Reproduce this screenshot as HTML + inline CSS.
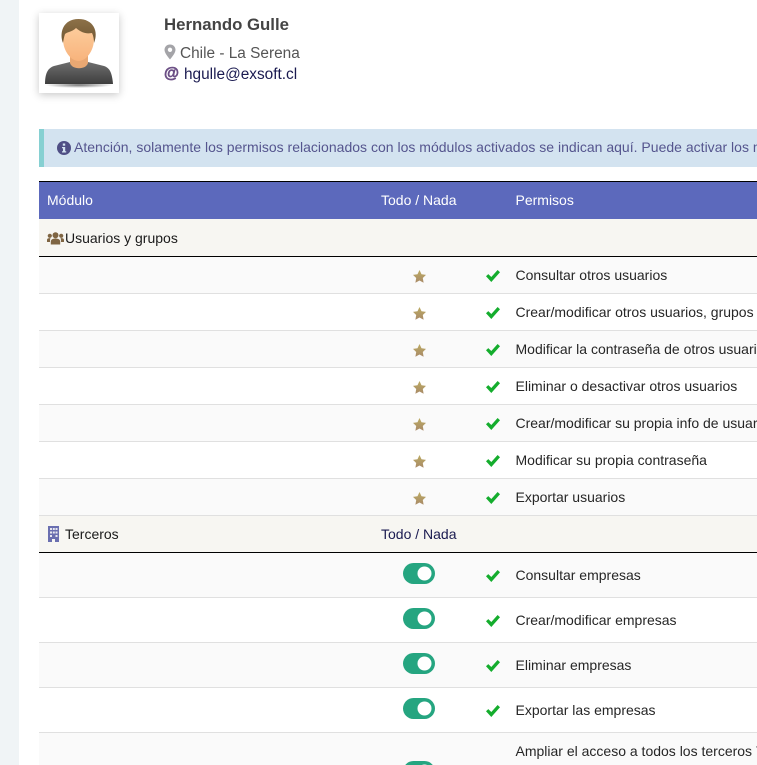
<!DOCTYPE html>
<html><head><meta charset="utf-8"><style>
html,body{margin:0;padding:0;background:#fff;overflow:hidden;width:757px;height:765px}
#p{position:relative;width:757px;height:765px;overflow:hidden;font:14px/20px "Liberation Sans",sans-serif;color:#262626}
.a{position:absolute;white-space:nowrap}
.row{position:absolute;left:39px;width:718px;border-bottom:1px solid #e0e0e0;box-sizing:border-box}
.t{position:absolute;left:515.500px;white-space:nowrap;height:20px}
</style></head><body><div id="p">
<div class="a" style="left:0;top:0;width:19px;height:765px;background:#f0f4f6"></div>

<div class="a" style="left:39px;top:13px;width:80px;height:80px;background:#fff;box-shadow:0 2px 8px rgba(0,0,0,.22)">
<svg width="80" height="80" viewBox="0 0 80 80">
<defs>
<linearGradient id="b" x1="0" y1="0" x2="0" y2="1"><stop offset="0" stop-color="#6e6e6e"/><stop offset="1" stop-color="#3e3e3e"/></linearGradient>
<linearGradient id="f" x1="0" y1="0" x2="0" y2="1"><stop offset="0" stop-color="#fdcf9f"/><stop offset="1" stop-color="#f8b37c"/></linearGradient>
<linearGradient id="hr" x1="0" y1="0" x2="0" y2="1"><stop offset="0" stop-color="#8d7148"/><stop offset="1" stop-color="#6f5632"/></linearGradient>
<radialGradient id="s" cx=".5" cy=".5" r=".5"><stop offset="0" stop-color="#777"/><stop offset="1" stop-color="#fff"/></radialGradient>
</defs>
<ellipse cx="40" cy="72" rx="34" ry="3" fill="url(#s)"/>
<path d="M6 71C6 60 9 55 15 53L31 49H49L65 53C71 55 73 60 74 71Z" fill="url(#b)"/>
<path d="M31 42V50C33 57 47 57 49 50V42Z" fill="#e9a873"/>
<path d="M24 26C24 16 30 11 39.500 11C49 11 55 16 55 26C55 38 47 48 39.500 48C32 48 24 38 24 26Z" fill="url(#f)"/>
<path d="M24 30C20 20 24 6 39.500 6C54 6 60 18 55 30C55 27 54.500 23 53 20C47 21 43 20 37 15C33 19 28 19 26 21C25 24 24.500 27 24 30Z" fill="url(#hr)"/>
</svg></div>

<div class="a" style="left:164px;top:15px;font-weight:bold;font-size:16.800px;color:#444">Hernando Gulle</div>
<svg class="a" style="left:164px;top:44px" width="12" height="16" viewBox="0 0 12 16"><path fill-rule="evenodd" d="M6 0.500C2.800 0.500 0.500 2.900 0.500 5.800C0.500 9 4 13 6 15.500C8 13 11.500 9 11.500 5.800C11.500 2.900 9.200 0.500 6 0.500ZM6 3.600A2.200 2.200 0 1 1 6 8A2.200 2.200 0 1 1 6 3.600Z" fill="#a4a4a8"/></svg>
<div class="a" style="left:180px;top:44px;font-size:15.400px;color:#555">Chile - La Serena</div>
<div class="a" style="left:164px;top:64px;font-size:15.400px;font-weight:bold;color:#6c4f85;-webkit-text-stroke:.6px #6c4f85">@</div>
<div class="a" style="left:184px;top:65px;font-size:15.400px;color:#1a1a50">hgulle@exsoft.cl</div>

<div class="a" style="left:39px;top:129px;width:718px;height:38px;background:#d3e3f0;overflow:hidden">
<div class="a" style="left:0;top:0;width:5px;height:38px;background:#86d0d2"></div>
<svg class="a" style="left:18px;top:12px" width="14" height="14" viewBox="0 0 14 14"><circle cx="7" cy="7" r="7" fill="#4f4f85"/><rect x="5.800" y="2.500" width="2.400" height="2.200" fill="#d3e3f0"/><path d="M5 6H8.200V10.200H9.200V11.500H5V10.200H6V7.300H5Z" fill="#d3e3f0"/></svg>
<div class="a" style="left:35px;top:8px;color:#55558e;font-size:14px;letter-spacing:.01px">Atención, solamente los permisos relacionados con los módulos activados se indican aquí. Puede activar los módulos</div>
</div>

<div class="a" style="left:39px;top:181px;width:718px;height:38px;background:#5c69bc;border-top:1px solid #000;box-sizing:border-box;color:#fff">
<div class="a" style="left:8px;top:8px">Módulo</div>
<div class="a" style="left:342px;top:8px">Todo / Nada</div>
<div class="a" style="left:476.500px;top:8px">Permisos</div>
</div>

<div class="a" style="left:39px;top:219px;width:718px;height:38px;background:#f7f6f2;border-bottom:1px solid #000;box-sizing:border-box;color:#1a1a1a">
<svg class="a" style="left:8px;top:13px" width="17" height="13" viewBox="0 0 17 13" fill="#7f6543"><circle cx="8.500" cy="3.200" r="3"/><circle cx="2.800" cy="3.800" r="2.100"/><circle cx="14.200" cy="3.800" r="2.100"/><path d="M3.800 12.500V9.500C3.800 7.500 6 6.500 8.500 6.500C11 6.500 13.200 7.500 13.200 9.500V12.500Z"/><path d="M0 10V8C0 6.500 1.500 6 3.500 6.200C3 7.200 3 8.500 3 10Z"/><path d="M17 10V8C17 6.500 15.500 6 13.500 6.200C14 7.200 14 8.500 14 10Z"/></svg>
<div class="a" style="left:26px;top:9px">Usuarios y grupos</div>
</div>

<svg width="0" height="0" style="position:absolute"><defs>
<linearGradient id="st" x1="0" y1="0" x2="0" y2="1"><stop offset="0" stop-color="#bcab62"/><stop offset="1" stop-color="#a98a68"/></linearGradient>
<symbol id="star" viewBox="0 0 13 13"><path d="M6.500 0L8.500 4.300L13 4.900L9.800 8L10.600 12.800L6.500 10.500L2.400 12.800L3.200 8L0 4.900L4.500 4.300Z" fill="url(#st)"/></symbol>
<symbol id="chk" viewBox="0 0 14 12"><path d="M0 6.300L2.300 4.100L5.300 7L11.600 0L14 2.200L5.300 12Z" fill="#14ad2d"/></symbol>
<symbol id="tog" viewBox="0 0 32 21"><rect width="32" height="21" rx="10.500" fill="#25a580"/><circle cx="21.500" cy="10.500" r="7" fill="#fff"/></symbol>
</defs></svg>

<div class="row" style="top:257px;height:37px;background:#fafafa"></div>
<div class="row" style="top:294px;height:37px;background:#fff"></div>
<div class="row" style="top:331px;height:37px;background:#fafafa"></div>
<div class="row" style="top:368px;height:37px;background:#fff"></div>
<div class="row" style="top:405px;height:37px;background:#fafafa"></div>
<div class="row" style="top:442px;height:37px;background:#fff"></div>
<div class="row" style="top:479px;height:37px;background:#fafafa"></div>

<svg class="a" style="left:413px;top:270px" width="13" height="13"><use href="#star"/></svg>
<svg class="a" style="left:413px;top:307px" width="13" height="13"><use href="#star"/></svg>
<svg class="a" style="left:413px;top:344px" width="13" height="13"><use href="#star"/></svg>
<svg class="a" style="left:413px;top:381px" width="13" height="13"><use href="#star"/></svg>
<svg class="a" style="left:413px;top:418px" width="13" height="13"><use href="#star"/></svg>
<svg class="a" style="left:413px;top:455px" width="13" height="13"><use href="#star"/></svg>
<svg class="a" style="left:413px;top:492px" width="13" height="13"><use href="#star"/></svg>

<svg class="a" style="left:486px;top:270px" width="14" height="12"><use href="#chk"/></svg>
<svg class="a" style="left:486px;top:307px" width="14" height="12"><use href="#chk"/></svg>
<svg class="a" style="left:486px;top:344px" width="14" height="12"><use href="#chk"/></svg>
<svg class="a" style="left:486px;top:381px" width="14" height="12"><use href="#chk"/></svg>
<svg class="a" style="left:486px;top:418px" width="14" height="12"><use href="#chk"/></svg>
<svg class="a" style="left:486px;top:455px" width="14" height="12"><use href="#chk"/></svg>
<svg class="a" style="left:486px;top:492px" width="14" height="12"><use href="#chk"/></svg>

<div class="t" style="top:265px">Consultar otros usuarios</div>
<div class="t" style="top:302px">Crear/modificar otros usuarios, grupos y permisos</div>
<div class="t" style="top:339px">Modificar la contraseña de otros usuarios</div>
<div class="t" style="top:376px">Eliminar o desactivar otros usuarios</div>
<div class="t" style="top:413px">Crear/modificar su propia info de usuario</div>
<div class="t" style="top:450px">Modificar su propia contraseña</div>
<div class="t" style="top:487px">Exportar usuarios</div>

<div class="a" style="left:39px;top:516px;width:718px;height:37px;background:#f7f6f2;border-bottom:1px solid #000;box-sizing:border-box;color:#1a1a1a">
<svg class="a" style="left:8px;top:10px" width="13" height="16" viewBox="0 0 13 16"><path fill="#6a6fb0" d="M1 0H12V16H8V13H5V16H1Z"/><g fill="#e8e8f0"><rect x="3" y="2" width="2" height="2"/><rect x="5.800" y="2" width="2" height="2"/><rect x="8.500" y="2" width="2" height="2"/><rect x="3" y="5.500" width="2" height="2"/><rect x="5.800" y="5.500" width="2" height="2"/><rect x="8.500" y="5.500" width="2" height="2"/><rect x="3" y="9" width="2" height="2"/><rect x="8.500" y="9" width="2" height="2"/></g></svg>
<div class="a" style="left:26px;top:8px">Terceros</div>
<div class="a" style="left:342px;top:8px;color:#1a1a50">Todo / Nada</div>
</div>

<div class="row" style="top:553px;height:45px;background:#fafafa"></div>
<div class="row" style="top:598px;height:45px;background:#fff"></div>
<div class="row" style="top:643px;height:45px;background:#fafafa"></div>
<div class="row" style="top:688px;height:45px;background:#fff"></div>
<div class="a" style="left:39px;top:733px;width:718px;height:32px;background:#fafafa"></div>

<svg class="a" style="left:403px;top:563px" width="32" height="21"><use href="#tog"/></svg>
<svg class="a" style="left:403px;top:608px" width="32" height="21"><use href="#tog"/></svg>
<svg class="a" style="left:403px;top:653px" width="32" height="21"><use href="#tog"/></svg>
<svg class="a" style="left:403px;top:698px" width="32" height="21"><use href="#tog"/></svg>
<svg class="a" style="left:403px;top:761px" width="32" height="21"><use href="#tog"/></svg>

<svg class="a" style="left:486px;top:570px" width="14" height="12"><use href="#chk"/></svg>
<svg class="a" style="left:486px;top:615px" width="14" height="12"><use href="#chk"/></svg>
<svg class="a" style="left:486px;top:660px" width="14" height="12"><use href="#chk"/></svg>
<svg class="a" style="left:486px;top:705px" width="14" height="12"><use href="#chk"/></svg>

<div class="t" style="top:565px">Consultar empresas</div>
<div class="t" style="top:610px">Crear/modificar empresas</div>
<div class="t" style="top:655px">Eliminar empresas</div>
<div class="t" style="top:700px">Exportar las empresas</div>
<div class="t" style="top:741px">Ampliar el acceso a todos los terceros Y sus objetos</div>
</div></body></html>
